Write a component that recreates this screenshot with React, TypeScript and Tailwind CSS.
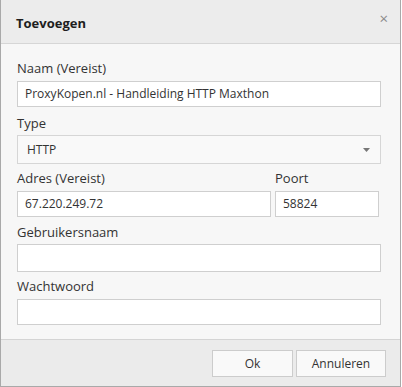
import React from 'react'

const font = { fontFamily: '"Open Sans", "Noto Sans", sans-serif' }

const Field = ({ value = '', className = '' }: { value?: string; className?: string }) => (
  <div className={`h-[26px] border border-[#cfcfcf] bg-white px-[7px] flex items-center text-[12px] text-[#333] ${className}`}>
    {value}
  </div>
)

const Label = ({ children, className = '' }: { children: React.ReactNode; className?: string }) => (
  <div className={`h-[18px] text-[13px] text-[#333] leading-[18px] ${className}`}>{children}</div>
)

export default function App() {
  return (
    <div style={font} className="w-[402px] h-[387px] bg-white">
      <div className="w-[401px] h-[387px] border-x border-b border-[#a9a9a9] flex flex-col bg-[#f7f7f7]">
        {/* header */}
        <div className="h-[44px] shrink-0 bg-[#ececec] border-b border-[#d6d6d6] flex items-center justify-between pl-[15px] pr-[12px]">
          <span className="text-[13px] font-bold text-[#1e1e1e] mt-[4px]">Toevoegen</span>
          <span className="text-[15px] text-[#8a8a8a] leading-none mb-[6px]">×</span>
        </div>

        {/* body */}
        <div className="h-[295px] shrink-0 pl-[16px] pr-[19px] pt-[15px]">
          <Label>Naam (Vereist)</Label>
          <Field className="mt-[4px]" value="ProxyKopen.nl - Handleiding HTTP Maxthon" />

          <Label className="mt-[7px]">Type</Label>
          <div className="mt-[3px] h-[29px] border border-[#d6d6d6] bg-[#f9f9f9] pl-[9px] pr-[10px] flex items-center justify-between text-[12px] text-[#333]">
            <span>HTTP</span>
            <svg width="7" height="4" viewBox="0 0 7 4"><path d="M0 0h7L3.5 4z" fill="#777" /></svg>
          </div>

          <div className="mt-[5px] flex gap-[4px]">
            <div className="w-[254px]">
              <Label>Adres (Vereist)</Label>
              <Field className="mt-[4px]" value="67.220.249.72" />
            </div>
            <div className="w-[104px]">
              <Label>Poort</Label>
              <Field className="mt-[4px]" value="58824" />
            </div>
          </div>

          <Label className="mt-[6px]">Gebruikersnaam</Label>
          <Field className="mt-[3px] h-[28px]" />

          <Label className="mt-[5px]">Wachtwoord</Label>
          <Field className="mt-[4px]" />
        </div>

        {/* footer */}
        <div className="flex-1 bg-[#ebebeb] border-t border-[#d4d4d4] flex items-start justify-end gap-[3px] pt-[10px] pr-[14px]">
          <button className="w-[81px] h-[27px] bg-[#f9f9f9] border border-[#cccccc] text-[12px] text-[#333]">Ok</button>
          <button className="w-[90px] h-[27px] bg-[#f9f9f9] border border-[#cccccc] text-[12px] text-[#333]">Annuleren</button>
        </div>
      </div>
    </div>
  )
}
